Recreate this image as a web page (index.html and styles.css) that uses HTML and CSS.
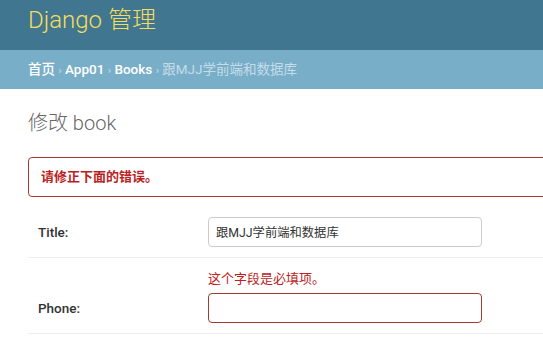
FILE: index.html
```html
<!DOCTYPE html>
<html lang="zh-Hans">
<head>
    <meta charset="UTF-8" />
    <title>修改 book | Django 站点管理员</title>
    <link rel="stylesheet" href="styles.css">
</head>
<body>

<div id="header">
    <h1 id="site-name">Django 管理</h1>
</div>

<div class="breadcrumbs">
    <a href="#">首页</a>
    <span class="sep">›</span> <a href="#">App01</a>
    <span class="sep">›</span> <a href="#">Books</a>
    <span class="sep">›</span> 跟MJJ学前端和数据库
</div>

<div id="content">
    <h1>修改 book</h1>

    <form>
        <p class="errornote">请修正下面的错误。</p>

        <fieldset class="module aligned">
            <div class="form-row">
                <div class="field">
                    <label class="required" for="id_title">Title:</label>
                    <input type="text" id="id_title" class="vTextField" value="跟MJJ学前端和数据库">
                </div>
            </div>

            <div class="form-row errors">
                <ul class="errorlist">
                    <li>这个字段是必填项。</li>
                </ul>
                <div class="field">
                    <label class="required" for="id_phone">Phone:</label>
                    <input type="text" id="id_phone" class="vTextField">
                </div>
            </div>
        </fieldset>
    </form>
</div>

</body>
</html>
```

FILE: styles.css
```css
/* Colori dell'admin di Django */
:root {
    --header: #417690;
    --crumbs: #79aec8;
    --crumbs-text: #c4dce8;
    --site-name: #f5dd5d;
    --error: #ba2121;
    --error-border: #a63a2e;
    --border: #eee;
}

* {
    box-sizing: border-box;
}

html, body {
    margin: 0;
    padding: 0;
}

body {
    font-family: Roboto, "Noto Sans CJK SC", sans-serif;
    font-size: 14px;
    color: #333;
    background: #fff;
    min-width: 760px;
    overflow: hidden;
}

#header {
    height: 50px;
    padding: 5px 28px 0;
    background: var(--header);
}

#site-name {
    margin: 0;
    font-size: 24px;
    line-height: 30px;
    font-weight: 300;
    color: var(--site-name);
}

.breadcrumbs {
    background: var(--crumbs);
    padding: 10px 28px;
    height: 39px;
    line-height: 19px;
    font-size: 13.5px;
    color: var(--crumbs-text);
}

.breadcrumbs a {
    color: #fff;
    text-decoration: none;
    font-weight: 500;
}

.breadcrumbs .sep {
    font-size: 11px;
}

#content {
    padding: 22px 0 0 28px;
}

#content h1 {
    margin: 0 0 22px;
    font-size: 20px;
    line-height: 24px;
    font-weight: 300;
    color: #666;
}

.errornote {
    margin: 0 0 10px;
    padding: 10px 12px;
    height: 40px;
    line-height: 18px;
    font-size: 13px;
    font-weight: 700;
    color: var(--error);
    border: 1px solid var(--error-border);
    border-radius: 4px;
}

fieldset {
    margin: 0;
    padding: 0;
    border: none;
}

.form-row {
    padding: 10px;
    border-bottom: 1px solid var(--border);
    font-size: 13px;
}

.field {
    display: flex;
    align-items: center;
}

.field label {
    width: 170px;
    padding-right: 10px;
    color: #333;
    font-size: 13.5px;
}

.field label.required {
    font-weight: 500;
}

.vTextField {
    width: 274px;
    height: 30px;
    padding: 5px 7px;
    font-family: Roboto, "Noto Sans CJK SC", sans-serif;
    font-size: 12.3px;
    color: #333;
    border: 1px solid #ccc;
    border-radius: 4px;
    background: #fff;
}

.errorlist {
    list-style: none;
    margin: 0 0 4px 170px;
    padding: 0;
    color: var(--error);
}

.errorlist li {
    font-size: 13px;
    line-height: 21px;
    margin-bottom: 4px;
}

.errors .vTextField {
    border-color: var(--error-border);
}
```
